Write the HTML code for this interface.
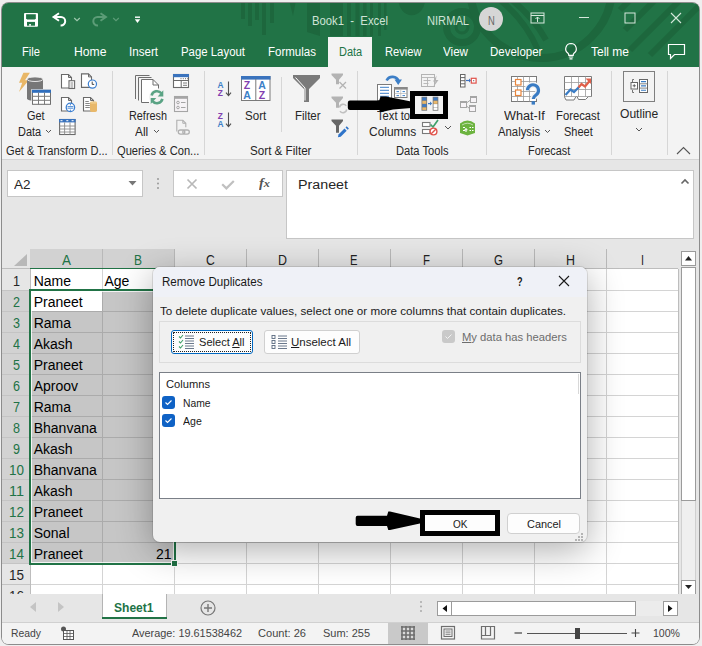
<!DOCTYPE html><html><head><meta charset="utf-8"><style>*{margin:0;padding:0}body{width:702px;height:646px;overflow:hidden;position:relative;font-family:"Liberation Sans",sans-serif}.a{position:absolute}.t{position:absolute;white-space:nowrap;transform-origin:0 0}#t0{transform:scaleX(0.9417)}#t1{transform:scaleX(0.9263)}#t2{transform:scaleX(0.7841)}#t3{transform:scaleX(0.9305)}#t4{transform:scaleX(1.0151)}#t5{transform:scaleX(0.9662)}#t6{transform:scaleX(0.9497)}#t7{transform:scaleX(0.9597)}#t8{transform:scaleX(0.9274)}#t9{transform:scaleX(0.9691)}#t10{transform:scaleX(0.9579)}#t11{transform:scaleX(0.9996)}#t12{transform:scaleX(0.9148)}#t13{transform:scaleX(0.9099)}#t14{transform:scaleX(0.9109)}#t15{transform:scaleX(0.9243)}#t16{transform:scaleX(0.9041)}#t17{transform:scaleX(0.9892)}#t18{transform:scaleX(0.9288)}#t19{transform:scaleX(0.9630)}#t20{transform:scaleX(0.9598)}#t21{transform:scaleX(0.9707)}#t22{transform:scaleX(0.9333)}#t23{transform:scaleX(0.9966)}#t24{transform:scaleX(0.9295)}#t25{transform:scaleX(1.0550)}#t26{transform:scaleX(0.9443)}#t27{transform:scaleX(0.9382)}#t28{transform:scaleX(0.9152)}#t29{transform:scaleX(0.9039)}#t30{transform:scaleX(1.0071)}#t31{transform:scaleX(0.9991)}#t32{transform:scaleX(1.1175)}#t33{transform:scaleX(1.1420)}#t34{transform:scaleX(0.9632)}#t35{transform:scaleX(0.8562)}#t36{transform:scaleX(0.8691)}#t37{transform:scaleX(0.8889)}#t38{transform:scaleX(0.8027)}#t39{transform:scaleX(0.8175)}#t40{transform:scaleX(0.8264)}#t41{transform:scaleX(0.8889)}#t42{transform:scaleX(0.7711)}#t43{transform:scaleX(0.8978)}#t44{transform:scaleX(0.8978)}#t45{transform:scaleX(0.8978)}#t46{transform:scaleX(0.8978)}#t47{transform:scaleX(0.8978)}#t48{transform:scaleX(0.8978)}#t49{transform:scaleX(0.8978)}#t50{transform:scaleX(0.8978)}#t51{transform:scaleX(0.8978)}#t52{transform:scaleX(0.9629)}#t53{transform:scaleX(1.0311)}#t54{transform:scaleX(0.9629)}#t55{transform:scaleX(0.9629)}#t56{transform:scaleX(0.9629)}#t57{transform:scaleX(0.9629)}#t58{transform:scaleX(0.9629)}#t75{transform:scaleX(0.9263)}#t76{transform:scaleX(0.9435)}#t77{transform:scaleX(0.9899)}#t78{transform:scaleX(1.0062)}#t79{transform:scaleX(0.9980)}#t80{transform:scaleX(0.9595)}#t81{transform:scaleX(0.9659)}#t82{transform:scaleX(0.7041)}#t83{transform:scaleX(1.0590)}#t84{transform:scaleX(1.0052)}#t85{transform:scaleX(1.0438)}#t86{transform:scaleX(1.0219)}#t87{transform:scaleX(1.0137)}#t88{transform:scaleX(0.9406)}#t89{transform:scaleX(0.9603)}#t90{transform:scaleX(0.9116)}#t91{transform:scaleX(0.9927)}</style></head><body><div class="a" style="left:0px;top:0px;width:702px;height:646px;background:#efefef"></div>
<div class="a" style="left:2px;top:3px;width:697px;height:641px;background:#f3f3f3;border-radius:7px;box-shadow:0 0 0 1px #8c8c8c"></div>
<div class="a" style="left:2px;top:3px;width:697px;height:64px;background:#217346;border-radius:6px 6px 0 0;overflow:hidden"><svg width="697" height="64" style="position:absolute;left:0;top:0"><g transform="translate(-2,-3)"><g fill="#1d673d"><rect x="241" y="0" width="4" height="19"/><rect x="248" y="0" width="4" height="26"/><rect x="255" y="0" width="4" height="20"/><rect x="262" y="0" width="4" height="35"/><rect x="270" y="0" width="4" height="23"/><path d="M289 0h7l-3 16z"/><path d="M307 0h13v36l-13-4z"/><rect x="330" y="0" width="13" height="36"/><rect x="347" y="0" width="4" height="36"/><rect x="355.5" y="0" width="4" height="36"/><rect x="363" y="0" width="3.5" height="36"/><rect x="370" y="0" width="3" height="36"/><rect x="378" y="0" width="3" height="36"/><rect x="384" y="0" width="2.5" height="30"/><path d="M398.5 0a13 15 0 0 0 26.5 0z"/></g><circle cx="462" cy="27" r="15.5" fill="none" stroke="#1d673d" stroke-width="7"/><circle cx="462" cy="27" r="6" fill="none" stroke="#1d673d" stroke-width="3"/><circle cx="541" cy="-13" r="71" fill="none" stroke="#1d673d" stroke-width="8"/><g stroke="#1d673d" stroke-width="6"><path d="M500 0q25 20 38 50" fill="none"/><path d="M512 0q22 18 34 40" fill="none"/></g><g stroke="#1d673d" stroke-width="6"><line x1="630" y1="0" x2="620" y2="10"/><line x1="655" y1="0" x2="625" y2="30"/><line x1="680" y1="0" x2="630" y2="50"/><line x1="700" y1="5" x2="650" y2="55"/></g></g></svg></div>
<svg class="a" style="left:20px;top:10px;" width="22" height="20" viewBox="0 0 22 20"><rect x="4" y="3" width="14" height="13.8" rx="1" fill="#fff"/><path d="M6.1 4.2h9.7v4.2l-1 1h-7.7l-1-1z" fill="#217346"/><rect x="7" y="11.9" width="8" height="3.8" fill="#217346"/><rect x="9.1" y="14.1" width="1.9" height="1.6" fill="#fff"/></svg>
<svg class="a" style="left:48px;top:8px;" width="24" height="22" viewBox="0 0 24 22"><path d="M11 5.3L5.6 9L11 12.7" fill="none" stroke="#fff" stroke-width="2"/><path d="M6 9H13A4.2 4.2 0 0 1 13 17.4H12.6" fill="none" stroke="#fff" stroke-width="2"/></svg>
<svg class="a" style="left:73px;top:17px;" width="8" height="5" viewBox="0 0 8 5"><path d="M1.2 1l2.8 2.6L6.8 1" fill="none" stroke="#9fc8ae" stroke-width="1.2"/></svg>
<svg class="a" style="left:86px;top:8px;" width="24" height="22" viewBox="0 0 24 22"><path d="M14.5 5.3L19.9 9L14.5 12.7" fill="none" stroke="#5c9c77" stroke-width="2"/><path d="M19.5 9H11.5A4.2 4.2 0 0 0 11.5 17.4H12" fill="none" stroke="#5c9c77" stroke-width="2"/></svg>
<svg class="a" style="left:112px;top:17px;" width="8" height="5" viewBox="0 0 8 5"><path d="M1.2 1l2.8 2.6L6.8 1" fill="none" stroke="#5c9c77" stroke-width="1.2"/></svg>
<svg class="a" style="left:133px;top:15px;" width="9" height="9" viewBox="0 0 9 9"><rect x="2" y="1.5" width="5" height="1.4" fill="#fff"/><path d="M1.8 4.3h5.4l-2.7 3.7z" fill="#fff"/></svg>
<div id="t0" class="t" style="left:312px;top:15.00px;font-size:12px;line-height:12px;color:#cfe3d6;font-weight:400;">Book1&nbsp; -&nbsp; Excel</div>
<div id="t1" class="t" style="left:427px;top:15.00px;font-size:12px;line-height:12px;color:#cfe3d6;font-weight:400;">NIRMAL</div>
<div class="a" style="left:479px;top:7px;width:24px;height:24px;border-radius:50%;background:#d6d6d6"></div>
<div id="t2" class="t" style="left:488px;top:15.00px;font-size:12px;line-height:12px;color:#666;font-weight:400;">N</div>
<svg class="a" style="left:530px;top:12px;" width="16" height="12" viewBox="0 0 16 12"><rect x="1" y="1" width="13" height="10" fill="none" stroke="#d6e8dc" stroke-width="1"/><line x1="1" y1="3.5" x2="14" y2="3.5" stroke="#d6e8dc"/><path d="M7.5 5v5 M5.5 7l2-2 2 2" fill="none" stroke="#d6e8dc"/></svg>
<svg class="a" style="left:578px;top:16px;" width="12" height="3" viewBox="0 0 12 3"><line x1="1" y1="1.5" x2="11" y2="1.5" stroke="#d6e8dc" stroke-width="1"/></svg>
<svg class="a" style="left:624px;top:12px;" width="12" height="12" viewBox="0 0 12 12"><rect x="1" y="1" width="10" height="10" fill="none" stroke="#d6e8dc" stroke-width="1"/></svg>
<svg class="a" style="left:670px;top:12px;" width="12" height="12" viewBox="0 0 12 12"><path d="M1 1L11 11M11 1L1 11" stroke="#d6e8dc" stroke-width="1.1"/></svg>
<div class="a" style="left:328px;top:37px;width:44px;height:30px;background:#f3f3f3"></div>
<div id="t3" class="t" style="left:22px;top:46.00px;font-size:12px;line-height:12px;color:#ffffff;font-weight:400;">File</div>
<div id="t4" class="t" style="left:73.5px;top:46.00px;font-size:12px;line-height:12px;color:#ffffff;font-weight:400;">Home</div>
<div id="t5" class="t" style="left:129px;top:46.00px;font-size:12px;line-height:12px;color:#ffffff;font-weight:400;">Insert</div>
<div id="t6" class="t" style="left:180.5px;top:46.00px;font-size:12px;line-height:12px;color:#ffffff;font-weight:400;">Page Layout</div>
<div id="t7" class="t" style="left:267.6px;top:46.00px;font-size:12px;line-height:12px;color:#ffffff;font-weight:400;">Formulas</div>
<div id="t8" class="t" style="left:384.6px;top:46.00px;font-size:12px;line-height:12px;color:#ffffff;font-weight:400;">Review</div>
<div id="t9" class="t" style="left:443px;top:46.00px;font-size:12px;line-height:12px;color:#ffffff;font-weight:400;">View</div>
<div id="t10" class="t" style="left:490.3px;top:46.00px;font-size:12px;line-height:12px;color:#ffffff;font-weight:400;">Developer</div>
<div id="t11" class="t" style="left:591px;top:46.00px;font-size:12px;line-height:12px;color:#ffffff;font-weight:400;">Tell me</div>
<div id="t12" class="t" style="left:338.5px;top:46.00px;font-size:12px;line-height:12px;color:#217346;font-weight:400;">Data</div>
<svg class="a" style="left:563px;top:42px;" width="16" height="18" viewBox="0 0 16 18"><path d="M8 1.5a5.3 5.3 0 0 0-3.2 9.5c.7.6 1 1.4 1 2.3h4.4c0-.9.3-1.7 1-2.3A5.3 5.3 0 0 0 8 1.5z M5.8 15h4.4 M6.5 16.8h3" fill="none" stroke="#fff" stroke-width="1.2"/></svg>
<svg class="a" style="left:667px;top:43px;" width="19" height="17" viewBox="0 0 19 17"><path d="M1.5 1.5h16v10h-10l-4 4v-4h-2z" fill="none" stroke="#fff" stroke-width="1.2"/></svg>
<div class="a" style="left:2px;top:159px;width:697px;height:1px;background:#d5d5d5"></div>
<div class="a" style="left:112px;top:71px;width:1px;height:84px;background:#d6d6d6"></div>
<div class="a" style="left:204px;top:71px;width:1px;height:84px;background:#d6d6d6"></div>
<div class="a" style="left:357px;top:71px;width:1px;height:84px;background:#d6d6d6"></div>
<div class="a" style="left:486px;top:71px;width:1px;height:84px;background:#d6d6d6"></div>
<div class="a" style="left:611px;top:71px;width:1px;height:84px;background:#d6d6d6"></div>
<div class="a" style="left:667px;top:71px;width:1px;height:84px;background:#d6d6d6"></div>
<div class="a" style="left:281px;top:77px;width:1px;height:55px;background:#d6d6d6"></div>
<div id="t13" class="t" style="left:26.5px;top:110.00px;font-size:12px;line-height:12px;color:#262626;font-weight:400;">Get</div>
<div id="t14" class="t" style="left:17.6px;top:126.00px;font-size:12px;line-height:12px;color:#262626;font-weight:400;">Data</div>
<svg class="a" style="left:45px;top:129px;" width="7" height="5" viewBox="0 0 7 5"><path d="M1 1l2.5 2.5L6 1" fill="none" stroke="#555" stroke-width="1"/></svg>
<div id="t15" class="t" style="left:6px;top:145.00px;font-size:12px;line-height:12px;color:#262626;font-weight:400;">Get &amp; Transform D...</div>
<svg class="a" style="left:15px;top:70px;" width="40" height="40" viewBox="0 0 40 40"><path d="M8.4 2.8H14.9L10 10.2H13.8L4 22L7.2 12.8H4z" fill="#e9b766"/><path d="M12 9.2V28.5a8 2.3 0 0 0 16 0V9.2z" fill="#777"/><ellipse cx="20" cy="9.2" rx="8" ry="2.3" fill="#7a7a7a" stroke="#f3f3f3" stroke-width="0.9"/><rect x="16.3" y="19.1" width="20.3" height="16.3" fill="#f3f3f3"/><rect x="17.5" y="20.3" width="18" height="14" fill="#fff" stroke="#6f6f6f" stroke-width="1"/><rect x="17" y="19.8" width="19" height="3" fill="#2f6ebd"/><path d="M17.5 26.3h18M17.5 30.3h18M23.5 22.5v12M29.5 22.5v12" stroke="#7a7a7a" stroke-width="1"/></svg>
<svg class="a" style="left:55px;top:70px;" width="50" height="70" viewBox="0 0 50 70"><path d="M6.5 4.5h7l3 3v10.5h-10z" fill="#fff" stroke="#6a6a6a" stroke-width="1.1"/><path d="M13.5 4.5v3h3" fill="none" stroke="#6a6a6a" stroke-width="1"/><rect x="14" y="10.7" width="5.6" height="7.8" fill="#fff" stroke="#6a6a6a" stroke-width="1.1"/><path d="M15.5 13h2.7M15.5 15h2.7M15.5 17h2.7" stroke="#6a6a6a" stroke-width=".8"/><path d="M26.5 3.9h7l3 3v10.5h-10z" fill="#fff" stroke="#6a6a6a" stroke-width="1.1"/><path d="M33.5 3.9v3h3" fill="none" stroke="#6a6a6a" stroke-width="1"/><circle cx="37.4" cy="14.1" r="4.1" fill="#fff" stroke="#3b7fd1" stroke-width="1.2"/><path d="M37.2 11.6v2.8h2" fill="none" stroke="#333" stroke-width=".9"/><path d="M6.5 27.5h7l3 3v10.5h-10z" fill="#fff" stroke="#6a6a6a" stroke-width="1.1"/><path d="M13.5 27.5v3h3" fill="none" stroke="#6a6a6a" stroke-width="1"/><circle cx="15.4" cy="37.4" r="4.2" fill="#fff" stroke="#3b7fd1" stroke-width="1.3"/><path d="M12.5 36.6h5.8M12.5 38.2h5.8M15.4 33.8v1.6M15.4 39.6v1.6" stroke="#3b7fd1" stroke-width=".9"/><path d="M28.5 27.5h7l3 3v10.5h-10z" fill="#fff" stroke="#6a6a6a" stroke-width="1.1"/><path d="M35.5 27.5v3h3" fill="none" stroke="#6a6a6a" stroke-width="1"/><path d="M30.3 31.5h3.5M30.3 33.5h4.5M30.3 35.5h4.5M30.3 37.5h4.5" stroke="#6a6a6a" stroke-width=".8"/><path d="M35 32.5v8.2a3.5 1.3 0 0 0 7 0V32.5z" fill="#e8b86a"/><ellipse cx="38.5" cy="32.5" rx="3.5" ry="1.3" fill="#f0cc8a"/><rect x="4.6" y="49.5" width="15.5" height="15" fill="#fff" stroke="#6a6a6a" stroke-width="1.1"/><rect x="4" y="49" width="16.6" height="3.4" fill="#3a73bd"/><path d="M5.5 50.7h2M11.3 50.7h2M16.6 50.7h2" stroke="#fff" stroke-width="1"/><path d="M4.6 56h15.5M4.6 59h15.5M4.6 62h15.5M9.6 52.4v12.1M15 52.4v12.1" stroke="#8a8a8a" stroke-width=".9"/></svg>
<div id="t16" class="t" style="left:128.5px;top:110.00px;font-size:12px;line-height:12px;color:#262626;font-weight:400;">Refresh</div>
<div id="t17" class="t" style="left:135.3px;top:126.00px;font-size:12px;line-height:12px;color:#262626;font-weight:400;">All</div>
<svg class="a" style="left:153px;top:129px;" width="7" height="5" viewBox="0 0 7 5"><path d="M1 1l2.5 2.5L6 1" fill="none" stroke="#555" stroke-width="1"/></svg>
<div id="t18" class="t" style="left:116.5px;top:145.00px;font-size:12px;line-height:12px;color:#262626;font-weight:400;">Queries &amp; Con...</div>
<svg class="a" style="left:128px;top:70px;" width="40" height="40" viewBox="0 0 40 40"><path d="M7.5 29V5.5H21.5 M10.5 30.5V7.5H23.5" fill="none" stroke="#6e6e6e" stroke-width="1"/><path d="M13.5 32.5V9.5h11.5l5.5 5.5v17.5h-17z" fill="#fff"/><path d="M21 32.5h-7.5V9.5h11.5l5.5 5.5v3.5 M25 9.5v5.5h5.5" fill="none" stroke="#6e6e6e" stroke-width="1"/><circle cx="29" cy="27.2" r="8" fill="#f3f3f3"/><path d="M23.6 25.5a5.6 5.6 0 0 1 9.8-2.2 M34.4 28.9a5.6 5.6 0 0 1-9.8 2.2" fill="none" stroke="#5aa384" stroke-width="2.6"/><path d="M35.3 20.3v6.2h-5.6z M22.7 34.1v-6.2h5.6z" fill="#5aa384"/></svg>
<svg class="a" style="left:166px;top:70px;" width="30" height="70" viewBox="0 0 30 70"><rect x="7.5" y="4.5" width="15" height="13" fill="#fff" stroke="#6a6a6a" stroke-width="1.1"/><rect x="7" y="4" width="16" height="3.2" fill="#3a73bd"/><path d="M14.5 8.7h1M16.8 8.7h1M19 8.7h1M21 8.7h.8" stroke="#6a6a6a" stroke-width="1"/><path d="M7.5 10.5h15M15.2 10.5v7" stroke="#6a6a6a" stroke-width="1"/><path d="M17 13h4M17 15.3h4" stroke="#6a6a6a" stroke-width=".9"/><rect x="8.5" y="26.5" width="13" height="15" fill="#f6f3f6" stroke="#a5a5a5" stroke-width="1.1"/><rect x="8" y="26" width="14" height="2.8" fill="#a5a5a5"/><circle cx="12" cy="32.5" r="1.3" fill="none" stroke="#a5a5a5"/><circle cx="12" cy="37.5" r="1.3" fill="none" stroke="#a5a5a5"/><path d="M15 32.5h4.5M15 37.5h4.5" stroke="#a5a5a5" stroke-width="1"/><path d="M10.8 61.5V50.3h6l3 3v4" fill="none" stroke="#b0b0b0" stroke-width="1.1"/><path d="M16.8 50.3v3h3" fill="none" stroke="#b0b0b0" stroke-width="1"/><rect x="12.3" y="60" width="6.5" height="4.2" rx="2.1" fill="none" stroke="#b0b0b0" stroke-width="1.3"/><rect x="16.8" y="60" width="6.5" height="4.2" rx="2.1" fill="none" stroke="#b0b0b0" stroke-width="1.3"/></svg>
<svg class="a" style="left:216px;top:79px;" width="18" height="19" viewBox="0 0 18 19"><text x="1.5" y="8.6" font-size="8.4" font-weight="700" font-family="Liberation Sans" fill="#3d7fc7">A</text><text x="1.8" y="17.2" font-size="8.4" font-weight="700" font-family="Liberation Sans" fill="#8040b0">Z</text><path d="M12.5 2.5v14 M10 13.6l2.5 3 2.5-3" fill="none" stroke="#505050" stroke-width="1.1"/></svg>
<svg class="a" style="left:216px;top:110px;" width="18" height="19" viewBox="0 0 18 19"><text x="1.8" y="8.6" font-size="8.4" font-weight="700" font-family="Liberation Sans" fill="#8040b0">Z</text><text x="1.5" y="17.2" font-size="8.4" font-weight="700" font-family="Liberation Sans" fill="#3d7fc7">A</text><path d="M12.5 2.5v14 M10 13.6l2.5 3 2.5-3" fill="none" stroke="#505050" stroke-width="1.1"/></svg>
<svg class="a" style="left:240px;top:75px;" width="32" height="27" viewBox="0 0 32 27"><rect x="1.5" y="1.5" width="28.5" height="24" fill="#fff" stroke="#7a7a7a" stroke-width="1"/><rect x="1" y="1" width="29.5" height="3.6" fill="#3a73bd"/><path d="M15.8 4v21.5" stroke="#7a7a7a"/><text x="3.8" y="14" font-size="10.5" font-weight="700" font-family="Liberation Sans" fill="#8040b0">Z</text><text x="3.3" y="23.8" font-size="10.5" font-weight="700" font-family="Liberation Sans" fill="#3d7fc7">A</text><text x="18.3" y="14" font-size="10.5" font-weight="700" font-family="Liberation Sans" fill="#3d7fc7">A</text><text x="18.8" y="23.8" font-size="10.5" font-weight="700" font-family="Liberation Sans" fill="#8040b0">Z</text></svg>
<div id="t19" class="t" style="left:245.1px;top:110.00px;font-size:12px;line-height:12px;color:#262626;font-weight:400;">Sort</div>
<svg class="a" style="left:285px;top:70px;" width="40" height="40" viewBox="0 0 40 40"><path d="M8 4.9h27v3.2L24 19v13h-5V19L8 8.1z" fill="#7a7a7a"/><path d="M10.5 7.5L20 18v12.5" fill="none" stroke="#fff" stroke-width="1"/></svg>
<div id="t20" class="t" style="left:294.5px;top:110.00px;font-size:12px;line-height:12px;color:#262626;font-weight:400;">Filter</div>
<svg class="a" style="left:330px;top:72px;" width="20" height="20" viewBox="0 0 20 20"><path d="M1.5 1.5h11.5v1.5L9 7.8v4.5H6V7.8L1.5 3z" fill="#b3b3b3"/><path d="M9.5 10l6.5 6.5M16 10l-6.5 6.5" stroke="#b3b3b3" stroke-width="1.3"/></svg>
<svg class="a" style="left:330px;top:95px;" width="20" height="20" viewBox="0 0 20 20"><path d="M1.5 1.5h11.5v1.5L9 7.8v5H6V7.8L1.5 3z" fill="#b3b3b3"/><path d="M9.6 12.5a3.6 3.6 0 0 1 6.6-1.6 M16.6 14.5a3.6 3.6 0 0 1-6.6 1.6" fill="none" stroke="#c0c0c0" stroke-width="1.6"/></svg>
<svg class="a" style="left:330px;top:118px;" width="20" height="20" viewBox="0 0 20 20"><path d="M1.5 1.5h11.5v1.5L9 7.8v7H6V7.8L1.5 3z" fill="#666"/><path d="M8.5 16.5l6-6 2.2 2.2-6 6-2.8.6z" fill="#2f74c9"/><path d="M15.5 9.5l1.2-1.2 2.2 2.2-1.2 1.2z" fill="#2f74c9"/></svg>
<div id="t21" class="t" style="left:250.3px;top:145.00px;font-size:12px;line-height:12px;color:#262626;font-weight:400;">Sort &amp; Filter</div>
<svg class="a" style="left:370px;top:68px;" width="40" height="34" viewBox="0 0 40 34"><rect x="7.5" y="16.5" width="14" height="16" fill="#fff" stroke="#7a7a7a" stroke-width="1"/><path d="M10 19.3h9M10 22.3h9M10 25.3h9M10 28.3h9" stroke="#3d7fc7" stroke-width="1"/><rect x="24.5" y="19.5" width="12.5" height="10" fill="#fff" stroke="#7a7a7a" stroke-width="1"/><rect x="24" y="19" width="13.5" height="2.6" fill="#888"/><path d="M30.75 21.5v8M24.5 25.5h12.5" stroke="#aaa" stroke-width=".6"/><path d="M26.5 23.6h2.5M32.5 23.6h2.5M26.5 27.6h2.5M32.5 27.6h2.5" stroke="#3d7fc7" stroke-width="1"/><path d="M16.6 12.5a6.5 6.5 0 0 1 12 0.8" fill="none" stroke="#3d7fc7" stroke-width="2.6"/><path d="M24.5 11.5h7.5l-3.8 5.5z" fill="#3d7fc7"/></svg>
<div id="t22" class="t" style="left:376.5px;top:110.00px;font-size:12px;line-height:12px;color:#262626;font-weight:400;">Text to</div>
<div id="t23" class="t" style="left:368.5px;top:126.00px;font-size:12px;line-height:12px;color:#262626;font-weight:400;">Columns</div>
<svg class="a" style="left:420px;top:72px;" width="20" height="18" viewBox="0 0 20 18"><rect x="1.5" y="2.5" width="13" height="12" fill="#f3f3f3" stroke="#b3b3b3"/><path d="M1.5 5.5h13M3.5 8.5h7M3.5 11.5h5M7.5 5.5v9" stroke="#b3b3b3" stroke-width=".9"/><path d="M16.5 3.5l-3.5 6h2.5l-2.5 6 5.5-7.5h-2.5z" fill="#b3b3b3"/></svg>
<svg class="a" style="left:415px;top:96px;" width="28" height="18" viewBox="0 0 28 18"><rect x="6.5" y="0.7" width="5.6" height="14" fill="#777"/><rect x="7.3" y="1.5" width="4" height="3" fill="#3f7bc5"/><rect x="7.3" y="4.8" width="4" height="3" fill="#eab86b"/><rect x="7.3" y="8.1" width="4" height="3" fill="#3f7bc5"/><rect x="7.3" y="11.4" width="4" height="2.5" fill="#eab86b"/><rect x="17.7" y="0.7" width="5.6" height="14" fill="#777"/><rect x="18.5" y="1.5" width="4" height="3" fill="#3f7bc5"/><rect x="18.5" y="4.8" width="4" height="3" fill="#eab86b"/><rect x="18.5" y="8.1" width="4" height="3" fill="#fff"/><rect x="18.5" y="11.4" width="4" height="2.5" fill="#fff"/><path d="M13 7.6h2.5" stroke="#3f7bc5" stroke-width="1.3"/><path d="M15 5.6l2.2 2-2.2 2z" fill="#3f7bc5"/></svg>
<svg class="a" style="left:415px;top:115px;" width="30" height="22" viewBox="0 0 30 22"><rect x="7.5" y="7.5" width="7.5" height="4" fill="#fff" stroke="#7a7a7a" stroke-width="1.1"/><rect x="7.5" y="14.5" width="7.5" height="4" fill="#fff" stroke="#7a7a7a" stroke-width="1.1"/><path d="M15.5 9.5l2.5 2.5L23 5" fill="none" stroke="#3fa06a" stroke-width="1.7"/><circle cx="18.5" cy="16.5" r="3.4" fill="#fff" stroke="#e0524a" stroke-width="1.4"/><path d="M16.2 18.8l4.6-4.6" stroke="#e0524a" stroke-width="1.4"/></svg>
<svg class="a" style="left:444px;top:125px;" width="8" height="5" viewBox="0 0 8 5"><path d="M1 1l3 3 3-3" fill="none" stroke="#555" stroke-width="1"/></svg>
<svg class="a" style="left:458px;top:72px;" width="20" height="17" viewBox="0 0 20 17"><rect x="2.5" y="2.5" width="4.5" height="12.5" fill="#fff" stroke="#666"/><path d="M2.5 5.6h4.5M2.5 8.7h4.5M2.5 11.8h4.5" stroke="#666"/><path d="M8 8.5h3.5" stroke="#3b70c0" stroke-width="1.2"/><path d="M11 6.5l2 2-2 2z" fill="#3b70c0"/><rect x="13.3" y="6.3" width="4.8" height="4.8" fill="#fff" stroke="#e0524a" stroke-width="1.2"/><rect x="15.2" y="8.2" width="1" height="1" fill="#444"/></svg>
<svg class="a" style="left:458px;top:95px;" width="20" height="18" viewBox="0 0 20 18"><rect x="2.5" y="6.5" width="6" height="6" fill="#f6f3f6" stroke="#a5a5a5"/><rect x="2.5" y="6.5" width="6" height="1.5" fill="#a5a5a5"/><rect x="12.5" y="1.5" width="6" height="6" fill="#f6f3f6" stroke="#a5a5a5"/><rect x="12.5" y="1.5" width="6" height="1.5" fill="#a5a5a5"/><rect x="11.5" y="10.5" width="6" height="6" fill="#f6f3f6" stroke="#a5a5a5"/><rect x="11.5" y="10.5" width="6" height="1.5" fill="#a5a5a5"/><path d="M8.5 8l4-3M8.5 11l3 2.5" fill="none" stroke="#a5a5a5"/></svg>
<svg class="a" style="left:459px;top:118px;" width="18" height="18" viewBox="0 0 18 18"><path d="M1 5.5q7.5-6 15 0v9.5l-7.5 2.5L1 15z" fill="#6cb33f"/><path d="M3 7q5.5-3.5 11 0" fill="none" stroke="#fff" stroke-width=".8" opacity=".7"/><path d="M4 9.5h2M4 12.5h2M10.5 9.5h1.5M10.5 12.5h1.5M13 9.5h1.5M13 12.5h1.5M7 10v4M5.5 11.8h3" stroke="#fff" stroke-width="1.1"/></svg>
<div id="t24" class="t" style="left:395.8px;top:145.00px;font-size:12px;line-height:12px;color:#262626;font-weight:400;">Data Tools</div>
<svg class="a" style="left:505px;top:70px;" width="40" height="40" viewBox="0 0 40 40"><rect x="6.5" y="6.5" width="25" height="25" fill="#fff" stroke="#7a7a7a" stroke-width="1"/><path d="M6.5 11.5h25M6.5 16.5h25M6.5 21.5h25M6.5 26.5h25M12.5 6.5v25M18.5 6.5v25M24.5 6.5v25" stroke="#9a9a9a" stroke-width=".8"/><rect x="10.5" y="9.5" width="5.5" height="5.5" fill="#fff" stroke="#e8843a" stroke-width="1.2"/><rect x="10.5" y="20" width="5.5" height="5.5" fill="#fff" stroke="#e8843a" stroke-width="1.2"/><path d="M22.5 20.3a5.5 5.5 0 1 1 8.8 4.4c-1.8 1.3-3 2-3 4.3" fill="none" stroke="#f3f3f3" stroke-width="6"/><path d="M22.5 20.3a5.5 5.5 0 1 1 8.8 4.4c-1.8 1.3-3 2-3 4.3" fill="none" stroke="#3a7cc4" stroke-width="3.2"/><rect x="26.6" y="31.2" width="3.4" height="3.4" fill="#3a7cc4"/></svg>
<div id="t25" class="t" style="left:503.6px;top:110.00px;font-size:12px;line-height:12px;color:#262626;font-weight:400;">What-If</div>
<div id="t26" class="t" style="left:497.6px;top:126.00px;font-size:12px;line-height:12px;color:#262626;font-weight:400;">Analysis</div>
<svg class="a" style="left:544px;top:129px;" width="7" height="5" viewBox="0 0 7 5"><path d="M1 1l2.5 2.5L6 1" fill="none" stroke="#555" stroke-width="1"/></svg>
<svg class="a" style="left:560px;top:70px;" width="36" height="34" viewBox="0 0 36 34"><path d="M4.5 6.5h27v20h-3l-3 3h-7l-1.5-3h-1l-2 3.5h-8l-1.5-3z" fill="#fff" stroke="#7a7a7a" stroke-width="1"/><path d="M4.5 12.5h27M4.5 19.5h27M4.5 26.5h27M11.5 6.5v20M18.5 6.5v20M25.5 6.5v20" stroke="#9a9a9a" stroke-width=".8"/><path d="M5.5 25l5-5.5 3.5 2.5 5-5" fill="none" stroke="#3a7cc4" stroke-width="2.2"/><path d="M18.5 17.5l3-3.5 3.5 2.5 5-6" fill="none" stroke="#e0604a" stroke-width="2.2"/><path d="M25.5 8.5h5.5v5.5z" fill="#e0604a"/></svg>
<div id="t27" class="t" style="left:556.4px;top:110.00px;font-size:12px;line-height:12px;color:#262626;font-weight:400;">Forecast</div>
<div id="t28" class="t" style="left:564px;top:126.00px;font-size:12px;line-height:12px;color:#262626;font-weight:400;">Sheet</div>
<div id="t29" class="t" style="left:527.8px;top:145.00px;font-size:12px;line-height:12px;color:#262626;font-weight:400;">Forecast</div>
<div class="a" style="left:623px;top:71px;width:32px;height:31px;background:#f3f3f3;border:1px solid #7f7f7f;box-sizing:border-box"></div>
<svg class="a" style="left:628px;top:77px;" width="22" height="18" viewBox="0 0 22 18"><path d="M6 2.5h-1.5v2.5M4.5 13v2.5h1.5" fill="none" stroke="#666" stroke-width=".9"/><rect x="3" y="5.5" width="6.5" height="6.5" fill="#fff" stroke="#666" stroke-width="1"/><path d="M4.7 8.75h3.1M6.25 7.2v3.1" stroke="#555" stroke-width=".9"/><rect x="11.5" y="2.5" width="8" height="13" fill="#fff" stroke="#666" stroke-width="1"/><path d="M11.5 6.8h8M11.5 11.1h8" stroke="#666" stroke-width=".8"/><path d="M13 4.6h5M13 8.9h5M13 13.3h5" stroke="#3a7cc4" stroke-width="1.1"/></svg>
<div id="t30" class="t" style="left:619.9px;top:108.00px;font-size:12px;line-height:12px;color:#262626;font-weight:400;">Outline</div>
<svg class="a" style="left:635px;top:127px;" width="8" height="5" viewBox="0 0 8 5"><path d="M1 1l3 3 3-3" fill="none" stroke="#555" stroke-width="1"/></svg>
<svg class="a" style="left:676px;top:146px;" width="15" height="9" viewBox="0 0 15 9"><path d="M1 8l6.5-6.5L14 8" fill="none" stroke="#555" stroke-width="1.1"/></svg>
<div class="a" style="left:2px;top:160px;width:697px;height:89px;background:#e6e6e6"></div>
<div class="a" style="left:7px;top:170px;width:136px;height:27px;background:#fff;border:1px solid #c6c6c6;box-sizing:border-box"></div>
<div id="t31" class="t" style="left:14px;top:178.00px;font-size:13.5px;line-height:13.5px;color:#262626;font-weight:400;">A2</div>
<svg class="a" style="left:128px;top:181px;" width="9" height="5" viewBox="0 0 9 5"><path d="M0.5 0h8L4.5 4.5z" fill="#777"/></svg>
<svg class="a" style="left:156px;top:177px;" width="4" height="13" viewBox="0 0 4 13"><circle cx="2" cy="2" r="1" fill="#999"/><circle cx="2" cy="6.5" r="1" fill="#999"/><circle cx="2" cy="11" r="1" fill="#999"/></svg>
<div class="a" style="left:173px;top:170px;width:110px;height:27px;background:#fff;border:1px solid #c6c6c6;box-sizing:border-box"></div>
<svg class="a" style="left:186px;top:178px;" width="12" height="12" viewBox="0 0 12 12"><path d="M1.5 1.5L10.5 10.5M10.5 1.5L1.5 10.5" stroke="#b8b8b8" stroke-width="1.7"/></svg>
<svg class="a" style="left:221px;top:178px;" width="14" height="12" viewBox="0 0 14 12"><path d="M1.2 6.2l4.2 4.2L12.8 3" fill="none" stroke="#c0c0c0" stroke-width="2.2"/></svg>
<div id="t32" class="t" style="left:258.5px;top:176.00px;font-size:13px;line-height:13px;color:#555;font-weight:400;"><i style="font-family:Liberation Serif;font-weight:700">f<span style="font-size:11px">x</span></i></div>
<div class="a" style="left:286px;top:170px;width:408px;height:69px;background:#fff;border:1px solid #c6c6c6;box-sizing:border-box"></div>
<div id="t33" class="t" style="left:298px;top:179.00px;font-size:12.5px;line-height:12.5px;color:#262626;font-weight:400;">Praneet</div>
<svg class="a" style="left:680px;top:178px;" width="10" height="7" viewBox="0 0 10 7"><path d="M1.5 5.5L5 2l3.5 3.5" fill="none" stroke="#666" stroke-width="1.6"/></svg>
<div class="a" style="left:2px;top:249px;width:676px;height:20px;background:#e6e6e6"></div>
<div class="a" style="left:30px;top:249px;width:144px;height:20px;background:#d2d2d2"></div>
<div class="a" style="left:102px;top:249px;width:1px;height:20px;background:#b9b9b9"></div>
<div class="a" style="left:174px;top:249px;width:1px;height:20px;background:#b9b9b9"></div>
<div class="a" style="left:246px;top:249px;width:1px;height:20px;background:#b9b9b9"></div>
<div class="a" style="left:318px;top:249px;width:1px;height:20px;background:#b9b9b9"></div>
<div class="a" style="left:390px;top:249px;width:1px;height:20px;background:#b9b9b9"></div>
<div class="a" style="left:462px;top:249px;width:1px;height:20px;background:#b9b9b9"></div>
<div class="a" style="left:534px;top:249px;width:1px;height:20px;background:#b9b9b9"></div>
<div class="a" style="left:606px;top:249px;width:1px;height:20px;background:#b9b9b9"></div>
<div class="a" style="left:2px;top:268px;width:676px;height:1px;background:#bdbdbd"></div>
<div class="a" style="left:30px;top:268px;width:145px;height:2px;background:#217346"></div>
<svg class="a" style="left:13px;top:253px;" width="15" height="14" viewBox="0 0 15 14"><path d="M14 1v12H1z" fill="#b8b8b8"/></svg>
<div id="t34" class="t" style="left:61.5px;top:253.00px;font-size:14px;line-height:14px;color:#217346;font-weight:400;">A</div>
<div id="t35" class="t" style="left:134.0px;top:253.00px;font-size:14px;line-height:14px;color:#217346;font-weight:400;">B</div>
<div id="t36" class="t" style="left:205.6px;top:253.00px;font-size:14px;line-height:14px;color:#222;font-weight:400;">C</div>
<div id="t37" class="t" style="left:277.5px;top:253.00px;font-size:14px;line-height:14px;color:#222;font-weight:400;">D</div>
<div id="t38" class="t" style="left:350.25px;top:253.00px;font-size:14px;line-height:14px;color:#222;font-weight:400;">E</div>
<div id="t39" class="t" style="left:422.5px;top:253.00px;font-size:14px;line-height:14px;color:#222;font-weight:400;">F</div>
<div id="t40" class="t" style="left:493.5px;top:253.00px;font-size:14px;line-height:14px;color:#222;font-weight:400;">G</div>
<div id="t41" class="t" style="left:565.5px;top:253.00px;font-size:14px;line-height:14px;color:#222;font-weight:400;">H</div>
<div id="t42" class="t" style="left:640.5px;top:253.00px;font-size:14px;line-height:14px;color:#222;font-weight:400;">I</div>
<div class="a" style="left:30px;top:269px;width:648px;height:325px;background:#fff"></div>
<div class="a" style="left:102px;top:290px;width:72px;height:273px;background:#c6c6c6"></div>
<div class="a" style="left:30px;top:311px;width:72px;height:252px;background:#c6c6c6"></div>
<div class="a" style="left:2px;top:290px;width:676px;height:1px;background:#d4d4d4"></div>
<div class="a" style="left:2px;top:311px;width:676px;height:1px;background:#d4d4d4"></div>
<div class="a" style="left:2px;top:332px;width:676px;height:1px;background:#d4d4d4"></div>
<div class="a" style="left:2px;top:353px;width:676px;height:1px;background:#d4d4d4"></div>
<div class="a" style="left:2px;top:374px;width:676px;height:1px;background:#d4d4d4"></div>
<div class="a" style="left:2px;top:395px;width:676px;height:1px;background:#d4d4d4"></div>
<div class="a" style="left:2px;top:416px;width:676px;height:1px;background:#d4d4d4"></div>
<div class="a" style="left:2px;top:437px;width:676px;height:1px;background:#d4d4d4"></div>
<div class="a" style="left:2px;top:458px;width:676px;height:1px;background:#d4d4d4"></div>
<div class="a" style="left:2px;top:479px;width:676px;height:1px;background:#d4d4d4"></div>
<div class="a" style="left:2px;top:500px;width:676px;height:1px;background:#d4d4d4"></div>
<div class="a" style="left:2px;top:521px;width:676px;height:1px;background:#d4d4d4"></div>
<div class="a" style="left:2px;top:542px;width:676px;height:1px;background:#d4d4d4"></div>
<div class="a" style="left:2px;top:563px;width:676px;height:1px;background:#d4d4d4"></div>
<div class="a" style="left:2px;top:584px;width:676px;height:1px;background:#d4d4d4"></div>
<div class="a" style="left:102px;top:269px;width:1px;height:325px;background:#d4d4d4"></div>
<div class="a" style="left:174px;top:269px;width:1px;height:325px;background:#d4d4d4"></div>
<div class="a" style="left:246px;top:269px;width:1px;height:325px;background:#d4d4d4"></div>
<div class="a" style="left:318px;top:269px;width:1px;height:325px;background:#d4d4d4"></div>
<div class="a" style="left:390px;top:269px;width:1px;height:325px;background:#d4d4d4"></div>
<div class="a" style="left:462px;top:269px;width:1px;height:325px;background:#d4d4d4"></div>
<div class="a" style="left:534px;top:269px;width:1px;height:325px;background:#d4d4d4"></div>
<div class="a" style="left:606px;top:269px;width:1px;height:325px;background:#d4d4d4"></div>
<div class="a" style="left:678px;top:269px;width:1px;height:325px;background:#d4d4d4"></div>
<div class="a" style="left:30px;top:311px;width:144px;height:1px;background:#ababab"></div>
<div class="a" style="left:30px;top:332px;width:144px;height:1px;background:#ababab"></div>
<div class="a" style="left:30px;top:353px;width:144px;height:1px;background:#ababab"></div>
<div class="a" style="left:30px;top:374px;width:144px;height:1px;background:#ababab"></div>
<div class="a" style="left:30px;top:395px;width:144px;height:1px;background:#ababab"></div>
<div class="a" style="left:30px;top:416px;width:144px;height:1px;background:#ababab"></div>
<div class="a" style="left:30px;top:437px;width:144px;height:1px;background:#ababab"></div>
<div class="a" style="left:30px;top:458px;width:144px;height:1px;background:#ababab"></div>
<div class="a" style="left:30px;top:479px;width:144px;height:1px;background:#ababab"></div>
<div class="a" style="left:30px;top:500px;width:144px;height:1px;background:#ababab"></div>
<div class="a" style="left:30px;top:521px;width:144px;height:1px;background:#ababab"></div>
<div class="a" style="left:30px;top:542px;width:144px;height:1px;background:#ababab"></div>
<div class="a" style="left:102px;top:290px;width:1px;height:273px;background:#ababab"></div>
<div class="a" style="left:2px;top:269px;width:29px;height:325px;background:#e6e6e6"></div>
<div class="a" style="left:2px;top:290px;width:29px;height:273px;background:#d2d2d2"></div>
<div class="a" style="left:2px;top:290px;width:28px;height:1px;background:#c4c4c4"></div>
<div class="a" style="left:2px;top:311px;width:28px;height:1px;background:#c4c4c4"></div>
<div class="a" style="left:2px;top:332px;width:28px;height:1px;background:#c4c4c4"></div>
<div class="a" style="left:2px;top:353px;width:28px;height:1px;background:#c4c4c4"></div>
<div class="a" style="left:2px;top:374px;width:28px;height:1px;background:#c4c4c4"></div>
<div class="a" style="left:2px;top:395px;width:28px;height:1px;background:#c4c4c4"></div>
<div class="a" style="left:2px;top:416px;width:28px;height:1px;background:#c4c4c4"></div>
<div class="a" style="left:2px;top:437px;width:28px;height:1px;background:#c4c4c4"></div>
<div class="a" style="left:2px;top:458px;width:28px;height:1px;background:#c4c4c4"></div>
<div class="a" style="left:2px;top:479px;width:28px;height:1px;background:#c4c4c4"></div>
<div class="a" style="left:2px;top:500px;width:28px;height:1px;background:#c4c4c4"></div>
<div class="a" style="left:2px;top:521px;width:28px;height:1px;background:#c4c4c4"></div>
<div class="a" style="left:2px;top:542px;width:28px;height:1px;background:#c4c4c4"></div>
<div class="a" style="left:2px;top:563px;width:28px;height:1px;background:#c4c4c4"></div>
<div class="a" style="left:2px;top:584px;width:28px;height:1px;background:#c4c4c4"></div>
<div class="a" style="left:30px;top:269px;width:1px;height:325px;background:#bdbdbd"></div>
<div id="t43" class="t" style="left:12.7px;top:274.00px;font-size:14px;line-height:14px;color:#262626;font-weight:400;">1</div>
<div id="t44" class="t" style="left:12.7px;top:295.00px;font-size:14px;line-height:14px;color:#217346;font-weight:400;">2</div>
<div id="t45" class="t" style="left:12.7px;top:316.00px;font-size:14px;line-height:14px;color:#217346;font-weight:400;">3</div>
<div id="t46" class="t" style="left:12.7px;top:337.00px;font-size:14px;line-height:14px;color:#217346;font-weight:400;">4</div>
<div id="t47" class="t" style="left:12.7px;top:358.00px;font-size:14px;line-height:14px;color:#217346;font-weight:400;">5</div>
<div id="t48" class="t" style="left:12.7px;top:379.00px;font-size:14px;line-height:14px;color:#217346;font-weight:400;">6</div>
<div id="t49" class="t" style="left:12.7px;top:400.00px;font-size:14px;line-height:14px;color:#217346;font-weight:400;">7</div>
<div id="t50" class="t" style="left:12.7px;top:421.00px;font-size:14px;line-height:14px;color:#217346;font-weight:400;">8</div>
<div id="t51" class="t" style="left:12.7px;top:442.00px;font-size:14px;line-height:14px;color:#217346;font-weight:400;">9</div>
<div id="t52" class="t" style="left:8.7px;top:463.00px;font-size:14px;line-height:14px;color:#217346;font-weight:400;">10</div>
<div id="t53" class="t" style="left:8.7px;top:484.00px;font-size:14px;line-height:14px;color:#217346;font-weight:400;">11</div>
<div id="t54" class="t" style="left:8.7px;top:505.00px;font-size:14px;line-height:14px;color:#217346;font-weight:400;">12</div>
<div id="t55" class="t" style="left:8.7px;top:526.00px;font-size:14px;line-height:14px;color:#217346;font-weight:400;">13</div>
<div id="t56" class="t" style="left:8.7px;top:547.00px;font-size:14px;line-height:14px;color:#217346;font-weight:400;">14</div>
<div id="t57" class="t" style="left:8.7px;top:568.00px;font-size:14px;line-height:14px;color:#262626;font-weight:400;">15</div>
<div id="t58" class="t" style="left:8.7px;top:589.00px;font-size:14px;line-height:14px;color:#262626;font-weight:400;">16</div>
<div id="t59" class="t" style="left:33.7px;top:274.00px;font-size:14px;line-height:14px;color:#000;font-weight:400;">Name</div>
<div id="t60" class="t" style="left:33.7px;top:295.00px;font-size:14px;line-height:14px;color:#000;font-weight:400;">Praneet</div>
<div id="t61" class="t" style="left:33.7px;top:316.00px;font-size:14px;line-height:14px;color:#000;font-weight:400;">Rama</div>
<div id="t62" class="t" style="left:33.7px;top:337.00px;font-size:14px;line-height:14px;color:#000;font-weight:400;">Akash</div>
<div id="t63" class="t" style="left:33.7px;top:358.00px;font-size:14px;line-height:14px;color:#000;font-weight:400;">Praneet</div>
<div id="t64" class="t" style="left:33.7px;top:379.00px;font-size:14px;line-height:14px;color:#000;font-weight:400;">Aproov</div>
<div id="t65" class="t" style="left:33.7px;top:400.00px;font-size:14px;line-height:14px;color:#000;font-weight:400;">Rama</div>
<div id="t66" class="t" style="left:33.7px;top:421.00px;font-size:14px;line-height:14px;color:#000;font-weight:400;">Bhanvana</div>
<div id="t67" class="t" style="left:33.7px;top:442.00px;font-size:14px;line-height:14px;color:#000;font-weight:400;">Akash</div>
<div id="t68" class="t" style="left:33.7px;top:463.00px;font-size:14px;line-height:14px;color:#000;font-weight:400;">Bhanvana</div>
<div id="t69" class="t" style="left:33.7px;top:484.00px;font-size:14px;line-height:14px;color:#000;font-weight:400;">Akash</div>
<div id="t70" class="t" style="left:33.7px;top:505.00px;font-size:14px;line-height:14px;color:#000;font-weight:400;">Praneet</div>
<div id="t71" class="t" style="left:33.7px;top:526.00px;font-size:14px;line-height:14px;color:#000;font-weight:400;">Sonal</div>
<div id="t72" class="t" style="left:33.7px;top:547.00px;font-size:14px;line-height:14px;color:#000;font-weight:400;">Praneet</div>
<div id="t73" class="t" style="left:104.5px;top:274.00px;font-size:14px;line-height:14px;color:#000;font-weight:400;">Age</div>
<div id="t74" class="t" style="left:156px;top:547.00px;font-size:14px;line-height:14px;color:#000;font-weight:400;">21</div>
<div class="a" style="left:31px;top:291px;width:143px;height:272px;border:1px solid rgba(255,255,255,.8);box-sizing:border-box"></div>
<div class="a" style="left:29px;top:289px;width:147px;height:276px;border:2px solid #217346;box-sizing:border-box"></div>
<div class="a" style="left:171px;top:560px;width:7px;height:7px;background:#217346;border:1px solid #fff;box-sizing:border-box"></div>
<div class="a" style="left:678px;top:249px;width:21px;height:345px;background:#e6e6e6"></div>
<div class="a" style="left:678px;top:269px;width:1px;height:325px;background:#bdbdbd"></div>
<div class="a" style="left:681px;top:251px;width:15px;height:15px;background:#fff;border:1px solid #9b9b9b;box-sizing:border-box"></div>
<svg class="a" style="left:684px;top:255px;" width="9" height="6" viewBox="0 0 9 6"><path d="M1 5.5h7L4.5 1z" fill="#222"/></svg>
<div class="a" style="left:681px;top:267px;width:15px;height:313px;background:#efefef;border-left:1px solid #d0d0d0;border-right:1px solid #d0d0d0;box-sizing:border-box"></div>
<div class="a" style="left:681px;top:267px;width:15px;height:234px;background:#fff;border:1px solid #9b9b9b;box-sizing:border-box"></div>
<div class="a" style="left:681px;top:580px;width:15px;height:15px;background:#fff;border:1px solid #9b9b9b;box-sizing:border-box"></div>
<svg class="a" style="left:684px;top:584px;" width="9" height="6" viewBox="0 0 9 6"><path d="M1 1h7L4.5 5z" fill="#222"/></svg>
<div class="a" style="left:2px;top:594px;width:676px;height:1px;background:#c6c6c6"></div>
<div class="a" style="left:2px;top:594px;width:697px;height:28px;background:#e6e6e6"></div>
<svg class="a" style="left:30px;top:602px;" width="7" height="10" viewBox="0 0 7 10"><path d="M6 0v10L0 5z" fill="#c4c4c4"/></svg>
<svg class="a" style="left:58px;top:602px;" width="7" height="10" viewBox="0 0 7 10"><path d="M0 0v10L6 5z" fill="#c4c4c4"/></svg>
<div class="a" style="left:102px;top:594px;width:65px;height:25px;background:#fff;border-left:1px solid #b4b4b4;border-right:1px solid #b4b4b4;box-sizing:border-box"></div>
<div class="a" style="left:102px;top:617px;width:65px;height:2px;background:#217346"></div>
<div id="t75" class="t" style="left:114.2px;top:601.00px;font-size:13px;line-height:13px;color:#217346;font-weight:400;"><b>Sheet1</b></div>
<svg class="a" style="left:200px;top:600px;" width="16" height="16" viewBox="0 0 16 16"><circle cx="8" cy="8" r="7" fill="none" stroke="#777" stroke-width="1.2"/><path d="M8 4v8M4 8h8" stroke="#777" stroke-width="1.4"/></svg>
<svg class="a" style="left:419px;top:600px;" width="4" height="13" viewBox="0 0 4 13"><circle cx="2" cy="2" r="1" fill="#aaa"/><circle cx="2" cy="6.5" r="1" fill="#aaa"/><circle cx="2" cy="11" r="1" fill="#aaa"/></svg>
<div class="a" style="left:437px;top:601px;width:199px;height:15px;background:#fff;border:1px solid #9b9b9b;box-sizing:border-box"></div>
<div class="a" style="left:451px;top:601px;width:1px;height:15px;background:#9b9b9b"></div>
<svg class="a" style="left:441px;top:604px;" width="7" height="9" viewBox="0 0 7 9"><path d="M6 1v7L1.5 4.5z" fill="#111"/></svg>
<div class="a" style="left:636px;top:601px;width:27px;height:15px;background:#ececec"></div>
<div class="a" style="left:663px;top:601px;width:15px;height:15px;background:#fff;border:1px solid #9b9b9b;box-sizing:border-box"></div>
<svg class="a" style="left:667px;top:604px;" width="7" height="9" viewBox="0 0 7 9"><path d="M1 1v7L5.5 4.5z" fill="#111"/></svg>
<div class="a" style="left:2px;top:622px;width:697px;height:1px;background:#d0d0d0"></div>
<div class="a" style="left:2px;top:623px;width:697px;height:21px;background:#f3f3f3;border-radius:0 0 6px 6px"></div>
<div id="t76" class="t" style="left:11px;top:628.00px;font-size:11px;line-height:11px;color:#444;font-weight:400;">Ready</div>
<svg class="a" style="left:60px;top:626px;" width="14" height="14" viewBox="0 0 14 14"><circle cx="3.5" cy="3" r="2.5" fill="#555"/><rect x="3.5" y="4.5" width="10" height="9" fill="#fff" stroke="#555"/><path d="M3.5 7.5h10M3.5 10.5h10M7 4.5v9M10 4.5v9" stroke="#555" stroke-width=".8"/></svg>
<div id="t77" class="t" style="left:132px;top:628.00px;font-size:11px;line-height:11px;color:#444;font-weight:400;">Average: 19.61538462</div>
<div id="t78" class="t" style="left:258px;top:628.00px;font-size:11px;line-height:11px;color:#444;font-weight:400;">Count: 26</div>
<div id="t79" class="t" style="left:323px;top:628.00px;font-size:11px;line-height:11px;color:#444;font-weight:400;">Sum: 255</div>
<div class="a" style="left:388px;top:623px;width:40px;height:21px;background:#c9c9c9"></div>
<svg class="a" style="left:400px;top:625px;" width="16" height="16" viewBox="0 0 16 16"><rect x="2" y="2" width="12" height="12" fill="#d9d9d9"/><path d="M2 1v14M6 1v14M10 1v14M14 1v14M1 2h14M1 6h14M1 10h14M1 14h14" stroke="#6e6e6e" stroke-width="1.6"/></svg>
<svg class="a" style="left:440px;top:625px;" width="16" height="16" viewBox="0 0 16 16"><rect x="1.5" y="1.5" width="13" height="12.5" fill="none" stroke="#6e6e6e" stroke-width="1.2"/><rect x="4" y="4" width="8" height="7.5" fill="none" stroke="#6e6e6e" stroke-width="1"/><path d="M5.5 6h5M5.5 7.8h5M5.5 9.6h5" stroke="#6e6e6e" stroke-width=".8"/></svg>
<svg class="a" style="left:480px;top:625px;" width="16" height="16" viewBox="0 0 16 16"><path d="M1.5 1.5h13v12.5h-13z M1.5 10.5h9v-9 M5.5 1.5v9" fill="none" stroke="#6e6e6e" stroke-width="1.2"/></svg>
<svg class="a" style="left:512px;top:628px;" width="12" height="10" viewBox="0 0 12 10"><path d="M2.5 5h7.5" stroke="#444" stroke-width="1.2"/></svg>
<div class="a" style="left:527px;top:633px;width:100px;height:1px;background:#555"></div>
<div class="a" style="left:575px;top:628px;width:5px;height:11px;background:#444"></div>
<svg class="a" style="left:630px;top:627px;" width="11" height="12" viewBox="0 0 11 12"><path d="M1.5 6h8M5.5 2v8" stroke="#444" stroke-width="1.1"/></svg>
<div id="t80" class="t" style="left:653px;top:628.00px;font-size:11px;line-height:11px;color:#444;font-weight:400;">100%</div>
<div class="a" style="left:153px;top:267px;width:434px;height:275px;border-radius:7px;box-shadow:0 8px 36px rgba(0,0,0,.32),0 0 0 1px rgba(0,0,0,.10);background:#f0f0f0;overflow:hidden"><div style="position:absolute;left:0;top:0;width:434px;height:30px;background:#eff1f7"></div></div>
<div id="t81" class="t" style="left:161.5px;top:276.00px;font-size:12px;line-height:12px;color:#1a1a1a;font-weight:400;">Remove Duplicates</div>
<div id="t82" class="t" style="left:516.5px;top:275.00px;font-size:13px;line-height:13px;color:#1a1a1a;font-weight:700;">?</div>
<svg class="a" style="left:558px;top:275px;" width="12" height="12" viewBox="0 0 12 12"><path d="M1 1L11 11M11 1L1 11" stroke="#1a1a1a" stroke-width="1.1"/></svg>
<div id="t83" class="t" style="left:160px;top:306.00px;font-size:11px;line-height:11px;color:#1a1a1a;font-weight:400;">To delete duplicate values, select one or more columns that contain duplicates.</div>
<div class="a" style="left:159px;top:321px;width:422px;height:42px;border:1px solid #dcdcdc;box-sizing:border-box"></div>
<div class="a" style="left:171px;top:330px;width:82px;height:24px;background:#fdfdfd;border:1px solid #0067c0;border-radius:3px;box-sizing:border-box;outline:1px dotted #222;outline-offset:-3px"></div>
<svg class="a" style="left:178px;top:334px;" width="17" height="16" viewBox="0 0 17 16"><path d="M1 2.5l1.5 1.5L5 1 M1 7.5l1.5 1.5L5 6 M1 12.5l1.5 1.5L5 11" fill="none" stroke="#3fa06a" stroke-width="1.1"/><path d="M7 2h9M7 4.5h9M7 7h9M7 9.5h9M7 12h9M7 14.5h9" stroke="#5a6a80" stroke-width=".9"/></svg>
<div id="t84" class="t" style="left:198.5px;top:337.00px;font-size:11px;line-height:11px;color:#1a1a1a;font-weight:400;">Select <u>A</u>ll</div>
<div class="a" style="left:264px;top:330px;width:96px;height:24px;background:#fdfdfd;border:1px solid #d0d0d0;border-radius:3px;box-sizing:border-box"></div>
<svg class="a" style="left:271px;top:334px;" width="17" height="16" viewBox="0 0 17 16"><rect x="1" y="1.5" width="3" height="3" fill="none" stroke="#5a6a80" stroke-width=".9"/><rect x="1" y="6.5" width="3" height="3" fill="none" stroke="#5a6a80" stroke-width=".9"/><rect x="1" y="11.5" width="3" height="3" fill="none" stroke="#5a6a80" stroke-width=".9"/><path d="M7 2h9M7 4.5h9M7 7h9M7 9.5h9M7 12h9M7 14.5h9" stroke="#5a6a80" stroke-width=".9"/></svg>
<div id="t85" class="t" style="left:291px;top:337.00px;font-size:11px;line-height:11px;color:#1a1a1a;font-weight:400;"><u>U</u>nselect All</div>
<div class="a" style="left:442px;top:330px;width:13px;height:13px;background:#c9c9c9;border-radius:3px"></div>
<svg class="a" style="left:444px;top:332px;" width="9" height="9" viewBox="0 0 9 9"><path d="M1.5 4.5l2 2 4-4" fill="none" stroke="#f2f2f2" stroke-width="1"/></svg>
<div id="t86" class="t" style="left:462.3px;top:332.00px;font-size:11px;line-height:11px;color:#6d6d6d;font-weight:400;"><u>M</u>y data has headers</div>
<div class="a" style="left:159px;top:372px;width:422px;height:127px;background:#fff;border:1px solid #7a7f87;box-sizing:border-box"></div>
<div id="t87" class="t" style="left:165.5px;top:379.00px;font-size:11px;line-height:11px;color:#1a1a1a;font-weight:400;">Columns</div>
<div class="a" style="left:162px;top:396px;width:13px;height:13px;background:#0f62c5;border-radius:3px"></div>
<svg class="a" style="left:164px;top:398px;" width="9" height="9" viewBox="0 0 9 9"><path d="M1.5 4.5l2 2 4-4" fill="none" stroke="#fff" stroke-width="1.1"/></svg>
<div id="t88" class="t" style="left:182.8px;top:398.00px;font-size:11px;line-height:11px;color:#1a1a1a;font-weight:400;">Name</div>
<div class="a" style="left:162px;top:414px;width:13px;height:13px;background:#0f62c5;border-radius:3px"></div>
<svg class="a" style="left:164px;top:416px;" width="9" height="9" viewBox="0 0 9 9"><path d="M1.5 4.5l2 2 4-4" fill="none" stroke="#fff" stroke-width="1.1"/></svg>
<div id="t89" class="t" style="left:182.8px;top:416.00px;font-size:11px;line-height:11px;color:#1a1a1a;font-weight:400;">Age</div>
<div class="a" style="left:578px;top:374px;width:1px;height:20px;background:#d8d8d8"></div>
<div class="a" style="left:424px;top:514px;width:72px;height:18px;background:#fdfdfd"></div>
<div id="t90" class="t" style="left:452.5px;top:519.00px;font-size:11px;line-height:11px;color:#1a1a1a;font-weight:400;">OK</div>
<div class="a" style="left:507px;top:513px;width:73px;height:21px;background:#fdfdfd;border:1px solid #d0d0d0;border-radius:4px;box-sizing:border-box"></div>
<div id="t91" class="t" style="left:526.5px;top:519.00px;font-size:11px;line-height:11px;color:#1a1a1a;font-weight:400;">Cancel</div>
<svg class="a" style="left:574px;top:532px;" width="10" height="10" viewBox="0 0 10 10"><g fill="#b4b4b4"><rect x="7" y="1" width="2" height="2"/><rect x="4" y="4" width="2" height="2"/><rect x="7" y="4" width="2" height="2"/><rect x="1" y="7" width="2" height="2"/><rect x="4" y="7" width="2" height="2"/><rect x="7" y="7" width="2" height="2"/></g></svg>
<div class="a" style="left:410px;top:91px;width:38px;height:28px;border:5px solid #000;box-sizing:border-box"></div>
<svg class="a" style="left:0px;top:0px;pointer-events:none" width="702" height="646" viewBox="0 0 702 646"><path d="M350 100.5H379.2L380.5 96.5H386L411 101.5V108L393 109.5L380.5 112.2L379.2 110H350Q347.8 110 347.8 107.8V102.7Q347.8 100.5 350 100.5Z" fill="#000"/><path d="M357.5 515.8H387L388.3 511.6H390L421 518.8V523.2L390 530.1H388.3L387 526.1H357.5Q355.7 526.1 355.7 524.1V517.8Q355.7 515.8 357.5 515.8Z" fill="#000"/></svg>
<div class="a" style="left:420px;top:510px;width:80px;height:26px;border:5px solid #000;box-sizing:border-box"></div></body></html>
